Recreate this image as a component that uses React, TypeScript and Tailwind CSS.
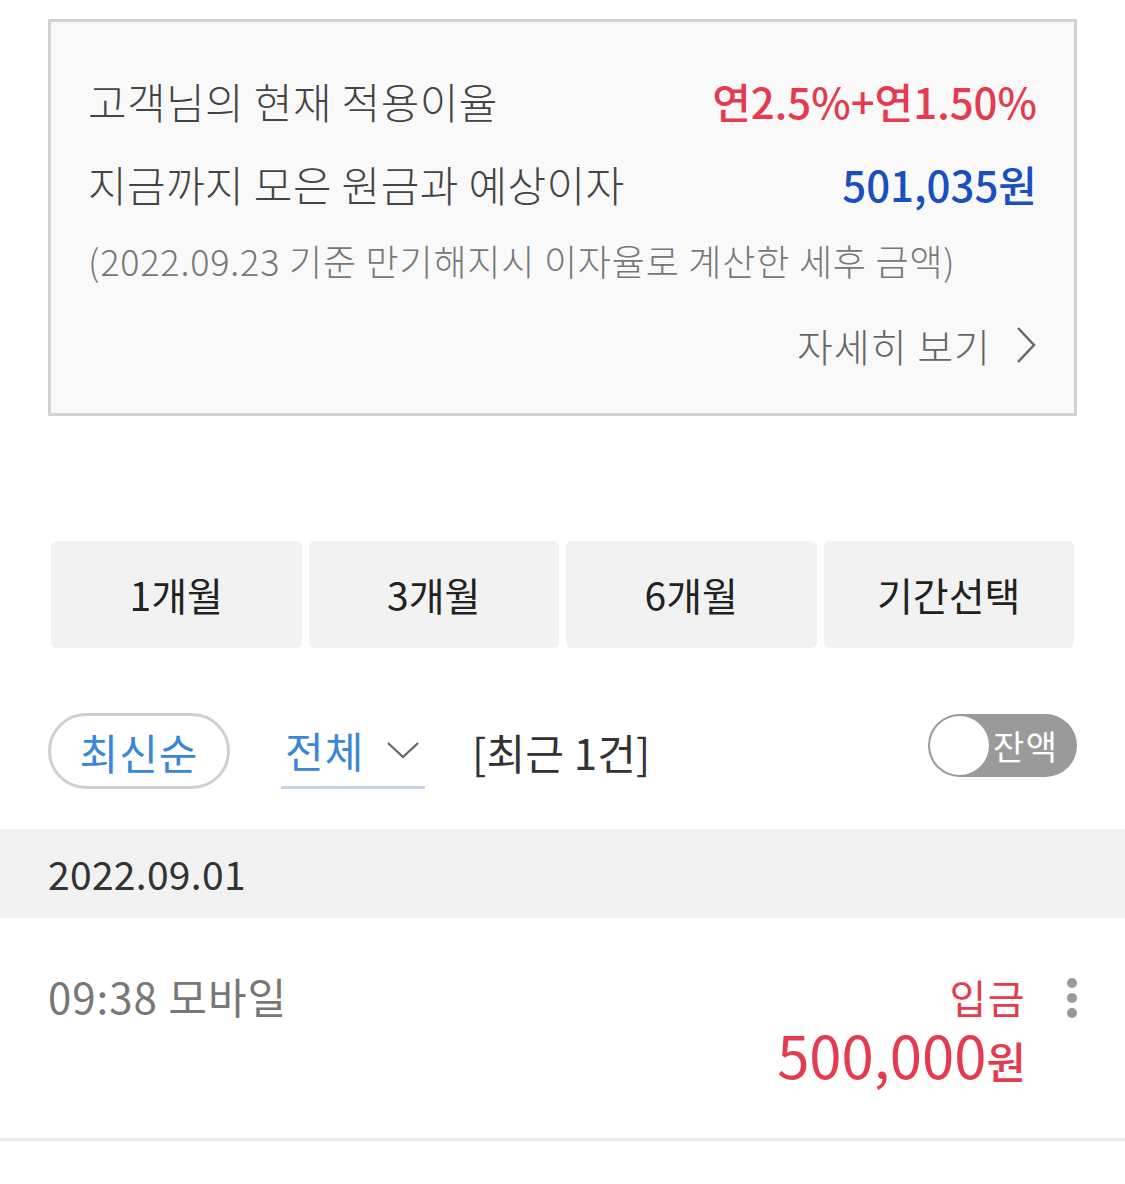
import React from "react";

const font = { fontFamily: '"Noto Sans CJK KR", "Noto Sans", sans-serif' };

export default function App() {
  return (
    <div className="w-[1125px] min-h-[1184px] bg-white font-['Noto_Sans_CJK_KR','Noto_Sans',sans-serif]" style={font}>
      <div className="px-[48px] pt-[19px]">
        {/* Summary box */}
        <div className="border-[3px] border-[#d2d2d2] bg-[#f9f9f9] px-[37px] pt-[50px] pb-[40px]">
          <div className="flex h-[56px] items-center justify-between">
            <span className="text-[42px] font-light text-[#444] tracking-[0.4px]">고객님의 현재 적용이율</span>
            <span className="text-[42px] font-medium text-[#e53b50]">연2.5%+연1.50%</span>
          </div>
          <div className="mt-[27px] flex h-[56px] items-center justify-between">
            <span className="text-[42px] font-light text-[#444] tracking-[0.4px]">지금까지 모은 원금과 예상이자</span>
            <span className="text-[42px] font-medium text-[#1a4fc2]">501,035원</span>
          </div>
          <div className="mt-[24px] flex h-[50px] items-center">
            <span className="text-[36px] font-light text-[#777] tracking-[0.8px]">(2022.09.23 기준 만기해지시 이자율로 계산한 세후 금액)</span>
          </div>
          <div className="mt-[32px] flex h-[56px] items-center justify-end">
            <span className="text-[39px] font-light text-[#666] tracking-[1px]">자세히 보기</span>
            <svg className="ml-[24px]" width="22" height="40" viewBox="0 0 22 40" fill="none">
              <path d="M3 3 L19 20 L3 37" stroke="#666" strokeWidth="2.5" />
            </svg>
          </div>
        </div>

        {/* Period buttons */}
        <div className="mt-[125px] grid grid-cols-4 gap-[7px] px-[3px]">
          {["1개월", "3개월", "6개월", "기간선택"].map((t) => (
            <div key={t} className="flex h-[107px] items-center justify-center rounded-[6px] bg-[#f2f2f2] text-[39px] text-[#222]">
              {t}
            </div>
          ))}
        </div>

        {/* Filter row */}
        <div className="mt-[65px] flex h-[76px] items-center">
          <div className="flex h-[76px] w-[182px] items-center justify-center rounded-full border-[3px] border-[#d0d0d0] text-[42px] text-[#3a87d5] tracking-[1px]">
            최신순
          </div>
          <div className="ml-[51px] flex h-[76px] w-[144px] items-center border-b-[3px] border-[#c6d4ea] pl-[4px]">
            <span className="text-[42px] text-[#3a87d5] tracking-[1px]">전체</span>
            <svg className="ml-[22px]" width="34" height="20" viewBox="0 0 34 20" fill="none">
              <path d="M2 3 L17 17 L32 3" stroke="#666" strokeWidth="2.2" />
            </svg>
          </div>
          <span className="ml-[47px] text-[42px] text-[#333] tracking-[0.2px]">[최근 1건]</span>
          <div className="ml-auto mb-[12px] flex h-[63px] w-[149px] items-center rounded-full bg-[#9a9a9a] pl-[2px]">
            <div className="h-[59px] w-[59px] rounded-full bg-white" />
            <span className="ml-[4px] text-[34px] text-white tracking-[1.5px]">잔액</span>
          </div>
        </div>
      </div>

      {/* Date band */}
      <div className="mt-[40px] flex h-[89px] items-center bg-[#f2f2f2] px-[48px]">
        <span className="text-[39px] text-[#333] tracking-[0.3px]">2022.09.01</span>
      </div>

      {/* Transaction row */}
      <div className="flex h-[223px] border-b-[3px] border-[#ebebeb] px-[48px] pt-[53px]">
        <span className="h-[50px] text-[42px] leading-[50px] text-[#777] tracking-[1px]">09:38 모바일</span>
        <div className="ml-auto flex flex-col items-end">
          <span className="h-[50px] pt-[1px] text-[40px] leading-[50px] text-[#e53b50] tracking-[1.5px]">입금</span>
          <span className="mt-[5px] leading-[56px] text-[#e53b50]">
            <span className="text-[58px]">500,000</span>
            <span className="text-[43px] font-medium">원</span>
          </span>
        </div>
        <div className="ml-[41px] flex flex-col gap-[5px] pt-[7px]">
          <div className="h-[10px] w-[10px] rounded-full bg-[#999]" />
          <div className="h-[10px] w-[10px] rounded-full bg-[#999]" />
          <div className="h-[10px] w-[10px] rounded-full bg-[#999]" />
        </div>
      </div>
    </div>
  );
}
